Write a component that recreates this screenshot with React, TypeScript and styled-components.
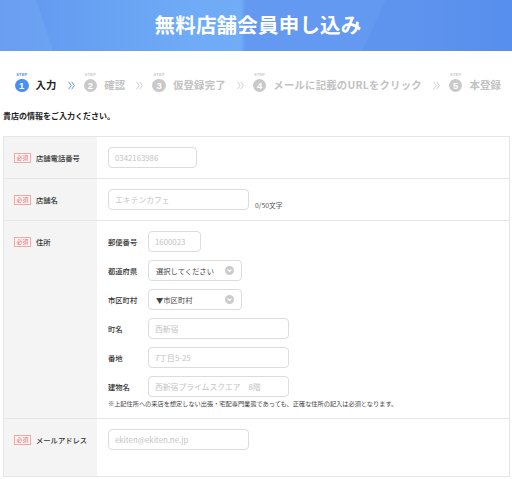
import React from "react";
import styled, { createGlobalStyle, css } from "styled-components";

const Global = createGlobalStyle`
  html, body { margin: 0; padding: 0; background: #fff; }
  body { font-family: "Noto Sans CJK JP", "Noto Sans", "Liberation Sans", sans-serif; color: #333; }
  * { box-sizing: border-box; }
`;

const Header = styled.header`
  height: 51px;
  display: flex;
  align-items: center;
  justify-content: center;
  background:
    linear-gradient(115deg, rgba(255,255,255,0) 0%, rgba(255,255,255,0) 72%, rgba(40,90,220,0.08) 72%, rgba(40,90,220,0.08) 100%),
    linear-gradient(72deg, rgba(255,255,255,0.06) 0%, rgba(255,255,255,0.06) 10%, rgba(255,255,255,0) 10%),
    linear-gradient(90deg, #6098f0 0%, #68a2f3 20%, #6fabf6 38%, #71acf6 47%, #6399f0 48%, #6399f0 80%, #5b93ef 100%);
`;

const Title = styled.h1`
  margin: 0 0 3px 4px;
  color: #fff;
  font-size: 20.5px;
  font-weight: 700;
  letter-spacing: 0.2px;
  line-height: 1;
`;

const Steps = styled.nav`
  display: flex;
  align-items: center;
  padding: 28px 0 0 15px;
  height: 41px;
`;

const Step = styled.div`
  display: flex;
  align-items: center;
  gap: 7px;
`;

const Mark = styled.span<{ $active?: boolean }>`
  position: relative;
  width: 13.5px;
  height: 13.5px;
  border-radius: 50%;
  background: ${(p) => (p.$active ? "#4b8ef1" : "#c9c9c9")};
  color: #fff;
  font-family: "Liberation Sans", Arial, sans-serif;
  font-weight: 700;
  font-size: 9.5px;
  display: flex;
  align-items: center;
  justify-content: center;
  line-height: 1;
`;

const Tag = styled.span<{ $active?: boolean }>`
  position: absolute;
  top: -6px;
  left: 50%;
  transform: translateX(-50%);
  font-size: 4px;
  font-weight: 700;
  letter-spacing: 0.2px;
  color: ${(p) => (p.$active ? "#4b8ef1" : "#c9c9c9")};
  font-family: "Liberation Sans", Arial, sans-serif;
  line-height: 1;
`;

const StepLabel = styled.span<{ $active?: boolean }>`
  font-size: 10.4px;
  font-weight: 700;
  letter-spacing: 0.2px;
  line-height: 1;
  white-space: nowrap;
  color: ${(p) => (p.$active ? "#222" : "#c2c2c2")};
`;

const ChevronWrap = styled.span`
  display: flex;
  margin: 0 9px 0 11px;
`;

const Chevron = ({ active }: { active?: boolean }) => (
  <ChevronWrap>
    <svg width="7" height="9" viewBox="0 0 7 9" fill="none">
      <path d="M0.6 0.8 L3.2 4.5 L0.6 8.2" stroke={active ? "#4b8ef1" : "#c9c9c9"} strokeWidth="0.9" />
      <path d="M3.7 0.8 L6.3 4.5 L3.7 8.2" stroke={active ? "#4b8ef1" : "#c9c9c9"} strokeWidth="0.9" />
    </svg>
  </ChevronWrap>
);

const Lead = styled.p`
  margin: 18px 0 0 3px;
  font-size: 8px;
  line-height: 12px;
  font-weight: 700;
  color: #222;
`;

const Table = styled.section`
  margin: 14px 2px 0 3px;
  border: 1px solid #e6e6e6;
  border-top: none;
`;

const Row = styled.div`
  display: grid;
  grid-template-columns: 93px 1fr;
  border-top: 1px solid #e6e6e6;
`;

const LabelCell = styled.div`
  background: #f4f4f4;
  padding: 10px 4px 10px 10px;
`;

const LabelLine = styled.div`
  height: 21px;
  display: flex;
  align-items: center;
  gap: 5px;
  white-space: nowrap;
`;

const Required = styled.span`
  font-size: 6px;
  line-height: 8px;
  padding: 0 1.5px;
  color: #e86a6a;
  border: 1px solid #f1a8a8;
  background: #fff7f7;
`;

const LabelText = styled.span`
  font-size: 7.3px;
  color: #333;
  font-weight: 500;
`;

const FieldCell = styled.div<{ $bottom?: number }>`
  padding: 10px 11px ${(p) => p.$bottom ?? 10}px 11px;
`;

const InlineField = styled.div`
  display: flex;
  align-items: flex-end;
  gap: 6px;
`;

const fieldBox = css`
  display: block;
  height: 21px;
  border: 1px solid #dcdcdc;
  border-radius: 4px;
  background: #fff;
`;

const Input = styled.input<{ $w: number }>`
  ${fieldBox};
  width: ${(p) => p.$w}px;
  margin: 0;
  padding: 0 6px;
  font-family: "Noto Sans CJK JP", "Noto Sans", sans-serif;
  font-size: 7.8px;
  color: #333;
  outline: none;
  &::placeholder { color: #c3c3c3; }
`;

const Counter = styled.span`
  font-size: 6.8px;
  line-height: 10px;
  color: #555;
`;

const AddrList = styled.div`
  display: flex;
  flex-direction: column;
  gap: 8px;
`;

const AddrRow = styled.div`
  display: flex;
  align-items: center;
`;

const SubLabel = styled.span`
  width: 40px;
  font-size: 7.3px;
  font-weight: 500;
  color: #333;
`;

const SelectBox = styled.div`
  ${fieldBox};
  width: 94px;
  display: flex;
  align-items: center;
  justify-content: space-between;
  padding: 0 7px 0 7px;
  font-size: 7.3px;
  color: #444;
`;

const Note = styled.p`
  margin: 3px 0 0;
  font-size: 6.2px;
  line-height: 8px;
  color: #444;
  white-space: nowrap;
`;

const SelectIcon = () => (
  <svg width="9" height="9" viewBox="0 0 9 9">
    <circle cx="4.5" cy="4.5" r="4.5" fill="#cbcbcb" />
    <path d="M2.6 3.6 L4.5 5.5 L6.4 3.6" stroke="#fff" strokeWidth="1.2" fill="none" />
  </svg>
);

const steps = ["入力", "確認", "仮登録完了", "メールに記載のURLをクリック", "本登録"];

const Label = ({ text }: { text: string }) => (
  <LabelCell>
    <LabelLine>
      <Required>必須</Required>
      <LabelText>{text}</LabelText>
    </LabelLine>
  </LabelCell>
);

export default function App() {
  return (
    <>
      <Global />
      <Header>
        <Title>無料店舗会員申し込み</Title>
      </Header>
      <Steps>
        {steps.map((s, i) => (
          <React.Fragment key={s}>
            <Step>
              <Mark $active={i === 0}>
                <Tag $active={i === 0}>STEP</Tag>
                {i + 1}
              </Mark>
              <StepLabel $active={i === 0}>{s}</StepLabel>
            </Step>
            {i < steps.length - 1 && <Chevron active={i === 0} />}
          </React.Fragment>
        ))}
      </Steps>
      <Lead>貴店の情報をご入力ください。</Lead>
      <Table>
        <Row>
          <Label text="店舗電話番号" />
          <FieldCell>
            <Input $w={89} placeholder="0342163986" readOnly />
          </FieldCell>
        </Row>
        <Row>
          <Label text="店舗名" />
          <FieldCell>
            <InlineField>
              <Input $w={141} placeholder="エキテンカフェ" readOnly />
              <Counter>0/50文字</Counter>
            </InlineField>
          </FieldCell>
        </Row>
        <Row>
          <Label text="住所" />
          <FieldCell>
            <AddrList>
              <AddrRow>
                <SubLabel>郵便番号</SubLabel>
                <Input $w={53} placeholder="1600023" readOnly />
              </AddrRow>
              <AddrRow>
                <SubLabel>都道府県</SubLabel>
                <SelectBox>
                  <span>選択してください</span>
                  <SelectIcon />
                </SelectBox>
              </AddrRow>
              <AddrRow>
                <SubLabel>市区町村</SubLabel>
                <SelectBox>
                  <span>▼市区町村</span>
                  <SelectIcon />
                </SelectBox>
              </AddrRow>
              <AddrRow>
                <SubLabel>町名</SubLabel>
                <Input $w={141} placeholder="西新宿" readOnly />
              </AddrRow>
              <AddrRow>
                <SubLabel>番地</SubLabel>
                <Input $w={141} placeholder="7丁目5-25" readOnly />
              </AddrRow>
              <AddrRow>
                <SubLabel>建物名</SubLabel>
                <Input $w={141} placeholder="西新宿プライムスクエア　8階" readOnly />
              </AddrRow>
            </AddrList>
            <Note>※上記住所への来店を想定しない出張・宅配専門業態であっても、正確な住所の記入は必須となります。</Note>
          </FieldCell>
        </Row>
        <Row>
          <Label text="メールアドレス" />
          <FieldCell $bottom={26}>
            <Input $w={141} placeholder="ekiten@ekiten.ne.jp" readOnly />
          </FieldCell>
        </Row>
      </Table>
    </>
  );
}
